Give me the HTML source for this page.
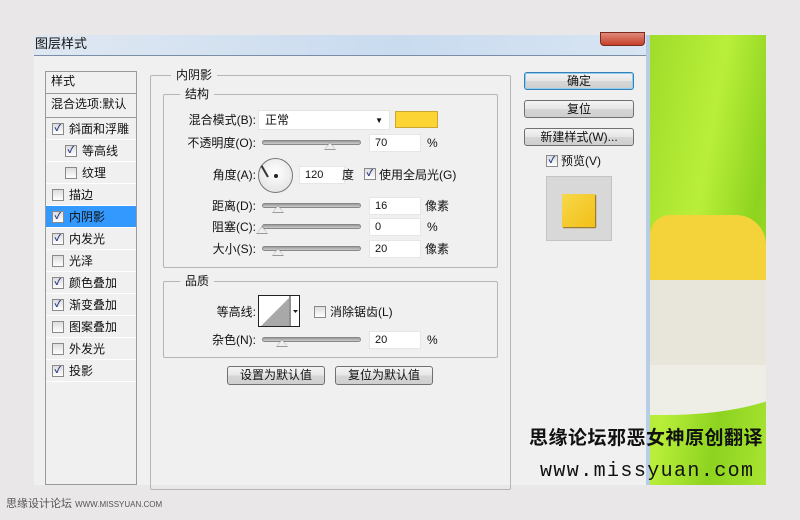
<!DOCTYPE html>
<html><head><meta charset="utf-8"><style>
*{margin:0;padding:0;box-sizing:border-box}
body{width:800px;height:520px;background:#e9e7e7;position:relative;overflow:hidden;font-family:"Liberation Sans","Noto Sans CJK SC",sans-serif;font-size:12px;color:#111}
.a{position:absolute}
.lbl{position:absolute;white-space:nowrap;line-height:14px}
.r{text-align:right}
.inp{position:absolute;background:#fff;border:1px solid #e6e6e6;height:18px;padding-left:5px;line-height:17px;font-size:11px}
.sl{position:absolute;height:5px;border-radius:3px;background:linear-gradient(#999,#ccc);border:1px solid #888}
.th{position:absolute;width:0;height:0;border-left:6px solid transparent;border-right:6px solid transparent;border-bottom:8px solid #999}
.th:after{content:"";position:absolute;left:-5px;top:1px;border-left:5px solid transparent;border-right:5px solid transparent;border-bottom:6px solid #eee}
.cb{position:absolute;width:12px;height:12px;border:1px solid #8a8a8a;background:linear-gradient(#ddd,#fff);font-size:10px;line-height:10px;text-align:center;color:#2c3f8c;font-weight:bold;overflow:hidden}
.btn{position:absolute;border:1px solid #707070;border-radius:3px;background:linear-gradient(#f4f4f4 0,#e6e6e6 50%,#d6d6d6 51%,#cfcfcf 100%);text-align:center;font-size:12px;line-height:16px}
.grp{position:absolute;border:1px solid #b5b5b5;border-radius:2px}
.gl{position:absolute;background:#f0f0f0;padding:0 5px;line-height:14px}
.row{position:absolute;left:46px;width:90px;height:22px;border-bottom:1px solid #fff;display:flex;align-items:center;padding-left:6px}
.row .cb{position:relative;flex:none;margin-right:5px}
</style></head><body>
<div class="a" style="left:34px;top:35px;width:616px;height:450px;background:#f0f0f0;border-right:4px solid #b7cde6"></div>
<div class="a" style="left:34px;top:35px;width:612px;height:21px;background:linear-gradient(90deg,#dfe8f2,#c9dbef 60%,#d8e5f2);border-bottom:1px solid #7a8ea8"></div>
<div class="lbl" style="left:35px;top:37px;font-size:13px">图层样式</div>
<div class="a" style="left:600px;top:32px;width:45px;height:14px;background:linear-gradient(#e08a7a,#c4402a);border:1px solid #7a2a20;border-radius:0 0 4px 4px"></div>
<div class="a" style="left:45px;top:71px;width:92px;height:414px;border:1px solid #9a9a9a;background:#f0f0f0"></div>
<div class="lbl" style="left:51px;top:74px">样式</div>
<div class="a" style="left:46px;top:93px;width:90px;height:1px;background:#9a9a9a"></div>
<div class="lbl" style="left:51px;top:97px">混合选项:默认</div>
<div class="a" style="left:46px;top:117px;width:90px;height:1px;background:#9a9a9a"></div>
<div class="row" style="top:118px"><span class="cb">✓</span>斜面和浮雕</div>
<div class="row" style="top:140px;padding-left:19px"><span class="cb">✓</span>等高线</div>
<div class="row" style="top:162px;padding-left:19px"><span class="cb"></span>纹理</div>
<div class="row" style="top:184px"><span class="cb"></span>描边</div>
<div class="row" style="top:206px;background:#3399ff"><span class="cb">✓</span>内阴影</div>
<div class="row" style="top:228px"><span class="cb">✓</span>内发光</div>
<div class="row" style="top:250px"><span class="cb"></span>光泽</div>
<div class="row" style="top:272px"><span class="cb">✓</span>颜色叠加</div>
<div class="row" style="top:294px"><span class="cb">✓</span>渐变叠加</div>
<div class="row" style="top:316px"><span class="cb"></span>图案叠加</div>
<div class="row" style="top:338px"><span class="cb"></span>外发光</div>
<div class="row" style="top:360px"><span class="cb">✓</span>投影</div>
<div class="grp" style="left:150px;top:75px;width:361px;height:415px"></div>
<div class="gl" style="left:171px;top:68px">内阴影</div>
<div class="grp" style="left:163px;top:94px;width:335px;height:174px"></div>
<div class="gl" style="left:180px;top:87px">结构</div>
<div class="lbl r" style="left:160px;width:96px;top:113px">混合模式(B):</div>
<div class="a" style="left:258px;top:110px;width:132px;height:20px;background:#fff;border:1px solid #e4e4e4;padding-left:6px;line-height:19px">正常<span style="position:absolute;right:6px;font-size:8px">▼</span></div>
<div class="a" style="left:395px;top:111px;width:43px;height:17px;background:#fcd535;border:1px solid #c9a730"></div>
<div class="lbl r" style="left:160px;width:96px;top:136px">不透明度(O):</div>
<div class="sl" style="left:262px;top:140px;width:99px"></div><div class="th" style="left:324px;top:142px"></div>
<div class="inp" style="left:369px;top:134px;width:52px">70</div><div class="lbl" style="left:427px;top:136px">%</div>
<div class="lbl r" style="left:160px;width:96px;top:168px">角度(A):</div>
<div class="a" style="left:258px;top:158px;width:35px;height:35px;border-radius:50%;border:1px solid #777;background:radial-gradient(circle at 50% 40%,#fff,#ddd)"></div>
<div class="a" style="left:267px;top:164px;width:2px;height:13px;background:#333;transform:rotate(-30deg);transform-origin:bottom"></div>
<div class="a" style="left:274px;top:174px;width:4px;height:4px;border-radius:2px;background:#222"></div>
<div class="inp" style="left:299px;top:166px;width:46px">120</div><div class="lbl" style="left:342px;top:168px">度</div>
<div class="cb" style="left:364px;top:168px">✓</div><div class="lbl" style="left:379px;top:168px">使用全局光(G)</div>
<div class="lbl r" style="left:160px;width:96px;top:199px">距离(D):</div>
<div class="sl" style="left:262px;top:203px;width:99px"></div><div class="th" style="left:272px;top:205px"></div>
<div class="inp" style="left:369px;top:197px;width:52px">16</div><div class="lbl" style="left:425px;top:199px">像素</div>
<div class="lbl r" style="left:160px;width:96px;top:220px">阻塞(C):</div>
<div class="sl" style="left:262px;top:224px;width:99px"></div><div class="th" style="left:256px;top:226px"></div>
<div class="inp" style="left:369px;top:218px;width:52px">0</div><div class="lbl" style="left:427px;top:220px">%</div>
<div class="lbl r" style="left:160px;width:96px;top:242px">大小(S):</div>
<div class="sl" style="left:262px;top:246px;width:99px"></div><div class="th" style="left:272px;top:248px"></div>
<div class="inp" style="left:369px;top:240px;width:52px">20</div><div class="lbl" style="left:425px;top:242px">像素</div>
<div class="grp" style="left:163px;top:281px;width:335px;height:77px"></div>
<div class="gl" style="left:180px;top:274px">品质</div>
<div class="lbl r" style="left:160px;width:96px;top:305px">等高线:</div>
<div class="a" style="left:258px;top:295px;width:42px;height:32px;border:1px solid #222;background:#fff;overflow:hidden">
<svg width="42" height="32"><polygon points="2,30 30,2 30,30" fill="#a8a8a8"/><line x1="31" y1="0" x2="31" y2="32" stroke="#222"/><polygon points="34,14 39,14 36.5,17" fill="#222"/></svg></div>
<div class="cb" style="left:314px;top:306px"></div><div class="lbl" style="left:330px;top:305px">消除锯齿(L)</div>
<div class="lbl r" style="left:160px;width:96px;top:333px">杂色(N):</div>
<div class="sl" style="left:262px;top:337px;width:99px"></div><div class="th" style="left:276px;top:339px"></div>
<div class="inp" style="left:369px;top:331px;width:52px">20</div><div class="lbl" style="left:427px;top:333px">%</div>
<div class="btn" style="left:227px;top:366px;width:98px;height:19px">设置为默认值</div>
<div class="btn" style="left:335px;top:366px;width:98px;height:19px">复位为默认值</div>
<div class="btn" style="left:524px;top:72px;width:110px;height:18px;border-color:#3c7fb1;box-shadow:0 0 0 1px #8cd0f5 inset">确定</div>
<div class="btn" style="left:524px;top:100px;width:110px;height:18px">复位</div>
<div class="btn" style="left:524px;top:128px;width:110px;height:18px">新建样式(W)...</div>
<div class="cb" style="left:546px;top:155px">✓</div><div class="lbl" style="left:561px;top:154px">预览(V)</div>
<div class="a" style="left:546px;top:176px;width:66px;height:65px;background:#d8d8d8;border:1px solid #c4c4c4"></div>
<div class="a" style="left:562px;top:194px;width:33px;height:33px;background:linear-gradient(135deg,#f7d84a,#f2c018);box-shadow:1px 1px 1px #8a6a10"></div>
<div class="a" style="left:650px;top:35px;width:116px;height:450px;background:linear-gradient(100deg,#9fdc2a,#b9ef3a 40%,#8dd320 70%,#a8e532);overflow:hidden">
<div class="a" style="left:0;top:180px;width:116px;height:120px;background:#f3d23a;border-radius:20px 30px 0 0"></div>
<div class="a" style="left:0;top:245px;width:116px;height:90px;background:#e8e6da"></div>
<div class="a" style="left:-20px;top:330px;width:170px;height:50px;background:#eeede6;border-radius:0 0 80% 0"></div>
</div>
<div class="lbl" style="left:529px;top:428px;font-size:19px;line-height:22px;font-weight:bold;color:#111;letter-spacing:0.5px">思缘论坛邪恶女神原创翻译</div>
<div class="lbl" style="left:540px;top:460px;font-size:20px;line-height:24px;font-family:'Liberation Mono',monospace;color:#111;letter-spacing:1.4px">www.missyuan.com</div>
<div class="lbl" style="left:6px;top:497px;font-size:11px;color:#555">思缘设计论坛 <span style="font-size:8px">WWW.MISSYUAN.COM</span></div>
</body></html>
